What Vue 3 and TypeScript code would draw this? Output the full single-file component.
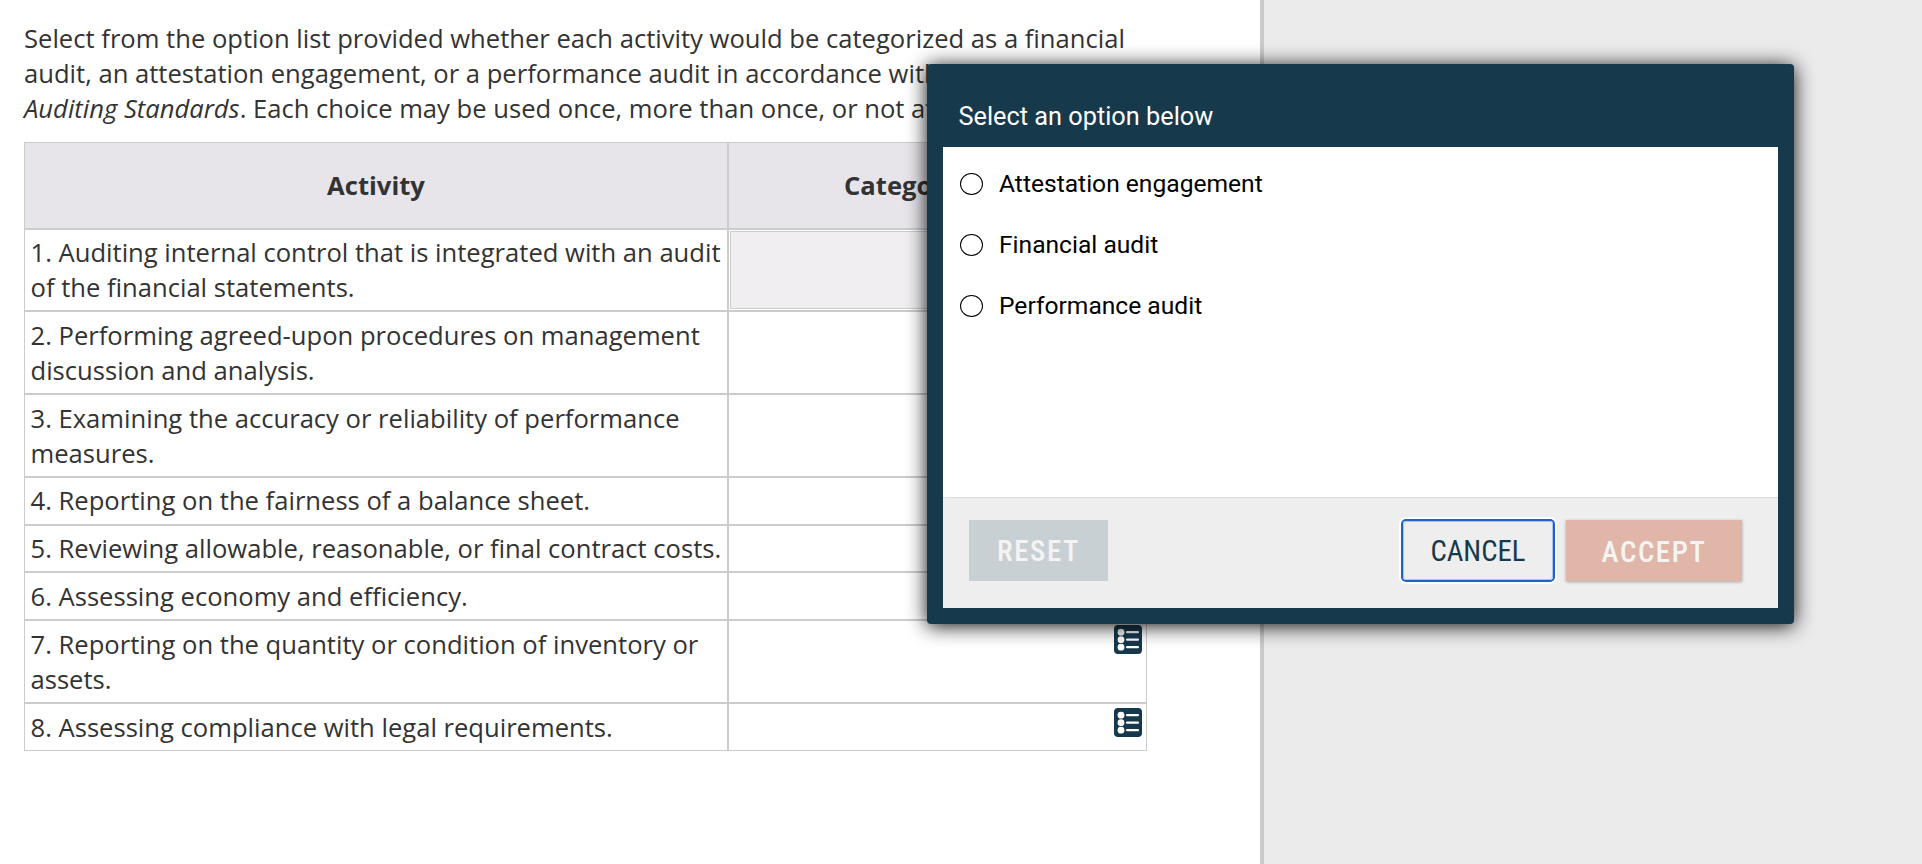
<script setup lang="ts">
import { ref } from 'vue'

interface Activity {
  id: number
  text: string
}

const activities: Activity[] = [
  { id: 1, text: 'Auditing internal control that is integrated with an audit of the financial statements.' },
  { id: 2, text: 'Performing agreed-upon procedures on management discussion and analysis.' },
  { id: 3, text: 'Examining the accuracy or reliability of performance measures.' },
  { id: 4, text: 'Reporting on the fairness of a balance sheet.' },
  { id: 5, text: 'Reviewing allowable, reasonable, or final contract costs.' },
  { id: 6, text: 'Assessing economy and efficiency.' },
  { id: 7, text: 'Reporting on the quantity or condition of inventory or assets.' },
  { id: 8, text: 'Assessing compliance with legal requirements.' },
]

const options: string[] = ['Attestation engagement', 'Financial audit', 'Performance audit']

const activeId = 1
const selected = ref('')
</script>

<template>
  <div class="page">
    <main class="sheet">
      <p class="intro">
        Select from the option list provided whether each activity would be categorized as a financial<br />
        audit, an attestation engagement, or a performance audit in accordance with <em>Government<br />
        Auditing Standards</em>. Each choice may be used once, more than once, or not at all.
      </p>

      <div class="table" role="table">
        <div class="row head" role="row">
          <div class="cell activity" role="columnheader">Activity</div>
          <div class="cell category" role="columnheader">Category</div>
        </div>
        <div v-for="a in activities" :key="a.id" class="row" role="row">
          <div class="cell activity" role="cell">{{ a.id }}. {{ a.text }}</div>
          <div class="cell category" :class="{ active: a.id === activeId }" role="cell">
            <svg class="list-icon" width="28" height="29" viewBox="0 0 28 29" aria-hidden="true">
              <rect width="28" height="29" rx="4" fill="#16384c" />
              <g fill="#fff">
                <circle cx="7" cy="7.2" r="3.4" />
                <circle cx="7" cy="14.7" r="3.4" />
                <circle cx="7" cy="22.2" r="3.4" />
                <rect x="12" y="6" width="13" height="2.2" rx="1" />
                <rect x="12" y="13.6" width="13" height="2.2" rx="1" />
                <rect x="12" y="21" width="13" height="2.2" rx="1" />
              </g>
            </svg>
          </div>
        </div>
      </div>
    </main>

    <section class="dialog" role="dialog" aria-label="Select an option below">
      <h2 class="title">Select an option below</h2>
      <div class="choices">
        <label v-for="o in options" :key="o" class="choice">
          <input v-model="selected" class="radio" type="radio" name="category" :value="o" />
          <span>{{ o }}</span>
        </label>
      </div>
      <footer class="actions">
        <button class="btn reset" type="button">RESET</button>
        <button class="btn cancel" type="button">CANCEL</button>
        <button class="btn accept" type="button">ACCEPT</button>
      </footer>
    </section>
  </div>
</template>

<style>
body {
  margin: 0;
}
</style>

<style scoped>
.page {
  position: relative;
  box-sizing: border-box;
  width: 1922px;
  height: 864px;
  overflow: hidden;
  background: #ebebeb;
}

.sheet {
  box-sizing: border-box;
  width: 1264px;
  height: 864px;
  padding: 21px 0 0 24px;
  border-right: 4px solid #cbcbcb;
  background: #fff;
  color: #333;
  font: 25.6px/35px "Open Sans", "Noto Sans", sans-serif;
}

.intro {
  margin: 0 0 16px;
  white-space: nowrap;
}

.table {
  width: 1123px;
  box-sizing: border-box;
  border: 1px solid #ccc;
}

.row {
  display: flex;
}

.row + .row {
  border-top: 2px solid #ccc;
}

.cell {
  box-sizing: border-box;
}

.activity {
  width: 702px;
  padding: 5.6px 2px 5.2px 5.5px;
}

.category {
  display: flex;
  flex: 1;
  justify-content: flex-end;
  border-left: 2px solid #ccc;
  padding: 4px 4px 0 0;
}

.category.active {
  position: relative;
}

.category.active::before {
  content: "";
  position: absolute;
  inset: 1px;
  border: 1px solid #ccc;
  background: #f0eef1;
}

.head {
  height: 84.5px;
  background: #e7e5ea;
  font-weight: 700;
}

.head .activity {
  padding: 25px 0 0;
  text-align: center;
}

.head .category {
  justify-content: flex-start;
  padding: 25px 0 0 115px;
}

.list-icon {
  display: block;
  flex: none;
}

.dialog {
  position: absolute;
  left: 927px;
  top: 64px;
  display: flex;
  flex-direction: column;
  box-sizing: border-box;
  width: 867px;
  height: 560px;
  padding: 0 16px 16px;
  border-radius: 4px;
  background: #17394c;
  box-shadow: 0 2px 20px rgba(0, 0, 0, 0.95);
  font-family: Roboto, sans-serif;
}

.title {
  margin: 0;
  height: 83px;
  padding: 36px 0 0 15.5px;
  box-sizing: border-box;
  color: #fff;
  font-size: 25.3px;
  font-weight: 370;
  line-height: 34px;
}

.choices {
  display: flex;
  flex: 1;
  flex-direction: column;
  gap: 31px;
  padding: 22px 17px 0;
  background: #fff;
}

.choice {
  display: flex;
  align-items: center;
  height: 30px;
  color: #000;
  font-size: 24.6px;
  font-weight: 430;
  line-height: 30px;
}

.radio {
  appearance: none;
  box-sizing: border-box;
  width: 23px;
  height: 22px;
  margin: 0 16px 0 0;
  border: 1px solid #000;
  border-radius: 50%;
  background: #fff;
}

.actions {
  display: flex;
  align-items: flex-start;
  box-sizing: border-box;
  height: 111px;
  padding: 22px 36px 0 26px;
  border-top: 1px solid #dadada;
  background: #eee;
}

.btn {
  box-sizing: border-box;
  height: 61px;
  padding: 0;
  border: 0;
  background: transparent;
  font-family: Roboto, sans-serif;
  font-size: 28.8px;
  font-stretch: 75%;
  font-weight: 400;
  line-height: 62px;
}

.reset {
  width: 139px;
  margin-right: auto;
  background: #c9d0d3;
  color: #f4f4f4;
  font-weight: 500;
  letter-spacing: 1.6px;
}

.cancel {
  width: 150px;
  height: 59px;
  margin: 1px 13px 0 0;
  border-radius: 3px;
  color: #17394c;
  line-height: 60px;
  box-shadow: inset 0 0 0 1px #a9c2ea, 0 0 0 2px #2061ca, 0 0 0 4px #fff;
}

.accept {
  width: 176px;
  padding-top: 1px;
  background: #e0b6a9;
  color: #f4f4f4;
  font-weight: 500;
  letter-spacing: 1.6px;
  box-shadow: 0 1px 3px rgba(0, 0, 0, 0.3);
}
</style>
